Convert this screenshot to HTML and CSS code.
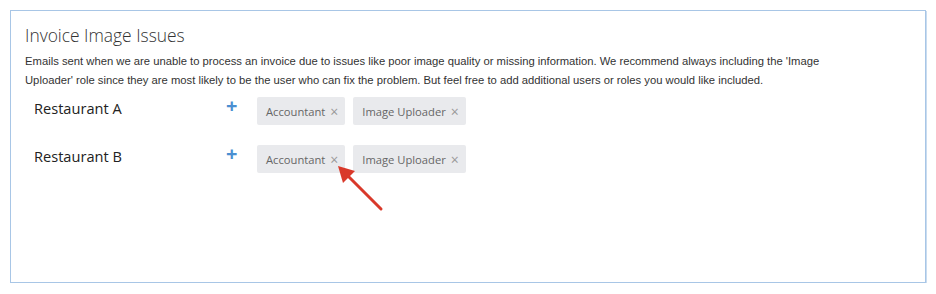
FILE: index.html
```html
<!DOCTYPE html>
<html lang="en">
<head>
    <meta charset="UTF-8">
    <title>Invoice Image Issues</title>
    <link rel="stylesheet" href="styles.css">
</head>
<body>
    <div class="panel">
        <h2 class="panel-title">Invoice Image Issues</h2>
        <p class="panel-desc">Emails sent when we are unable to process an invoice due to issues like poor image quality or missing information. We recommend always including the 'Image Uploader' role since they are most likely to be the user who can fix the problem. But feel free to add additional users or roles you would like included.</p>

        <div class="row">
            <div class="row-name">Restaurant A</div>
            <span class="add">+</span>
            <div class="chips">
                <span class="chip">Accountant <span class="chip-x">&times;</span></span>
                <span class="chip">Image Uploader <span class="chip-x">&times;</span></span>
            </div>
        </div>
        <div class="row">
            <div class="row-name">Restaurant B</div>
            <span class="add">+</span>
            <div class="chips">
                <span class="chip">Accountant <span class="chip-x">&times;</span></span>
                <span class="chip">Image Uploader <span class="chip-x">&times;</span></span>
            </div>
        </div>

        <svg class="pointer" width="60" height="60" viewBox="0 0 60 60">
            <line x1="46" y1="46" x2="12" y2="12" stroke="#d9392a" stroke-width="3" stroke-linecap="round"/>
            <polygon points="3,3 20,8 8,20" fill="#d9392a"/>
        </svg>
    </div>
</body>
</html>
```

FILE: styles.css
```css
body {
    margin: 0;
    background: #fff;
    font-family: "Liberation Sans", Arial, sans-serif;
}
.panel {
    position: relative;
    margin: 10px 0 0 10px;
    width: 916px;
    height: 273px;
    box-sizing: border-box;
    border: 1px solid #a8c6e6;
    box-shadow: 1px 1px 0 #c9dcf0;
    padding: 12px 70px 0 14px;
}
.panel-title {
    margin: 0;
    font-family: "Open Sans", sans-serif;
    font-weight: 300;
    font-size: 17.4px;
    line-height: 24px;
    color: #333;
}
.panel-desc {
    margin: 5px 0 0;
    font-size: 11.25px;
    line-height: 19px;
    color: #333;
}
.row {
    display: flex;
    align-items: flex-start;
    height: 48px;
    padding-left: 9px;
    padding-top: 8px;
}
.row + .row {
    padding-top: 0;
}
.row-name {
    width: 192px;
    font-family: "Open Sans", sans-serif;
    font-size: 14.6px;
    line-height: 20px;
    color: #222;
}
.add {
    width: 31px;
    margin-top: -4px;
    font-family: "Open Sans", sans-serif;
    font-size: 20px;
    font-weight: 700;
    line-height: 24px;
    color: #4b8fd1;
}
.chips {
    display: flex;
    gap: 8px;
    margin-top: -1px;
}
.chip {
    display: inline-flex;
    align-items: center;
    height: 28px;
    padding: 0 7px 0 9px;
    background: #e9eaed;
    border-radius: 2px;
    font-family: "Open Sans", sans-serif;
    font-size: 11.2px;
    color: #666;
}
.chip-x {
    margin-left: 5px;
    font-size: 14px;
    color: #999;
}
.pointer {
    position: absolute;
    left: 324px;
    top: 152px;
}
```
